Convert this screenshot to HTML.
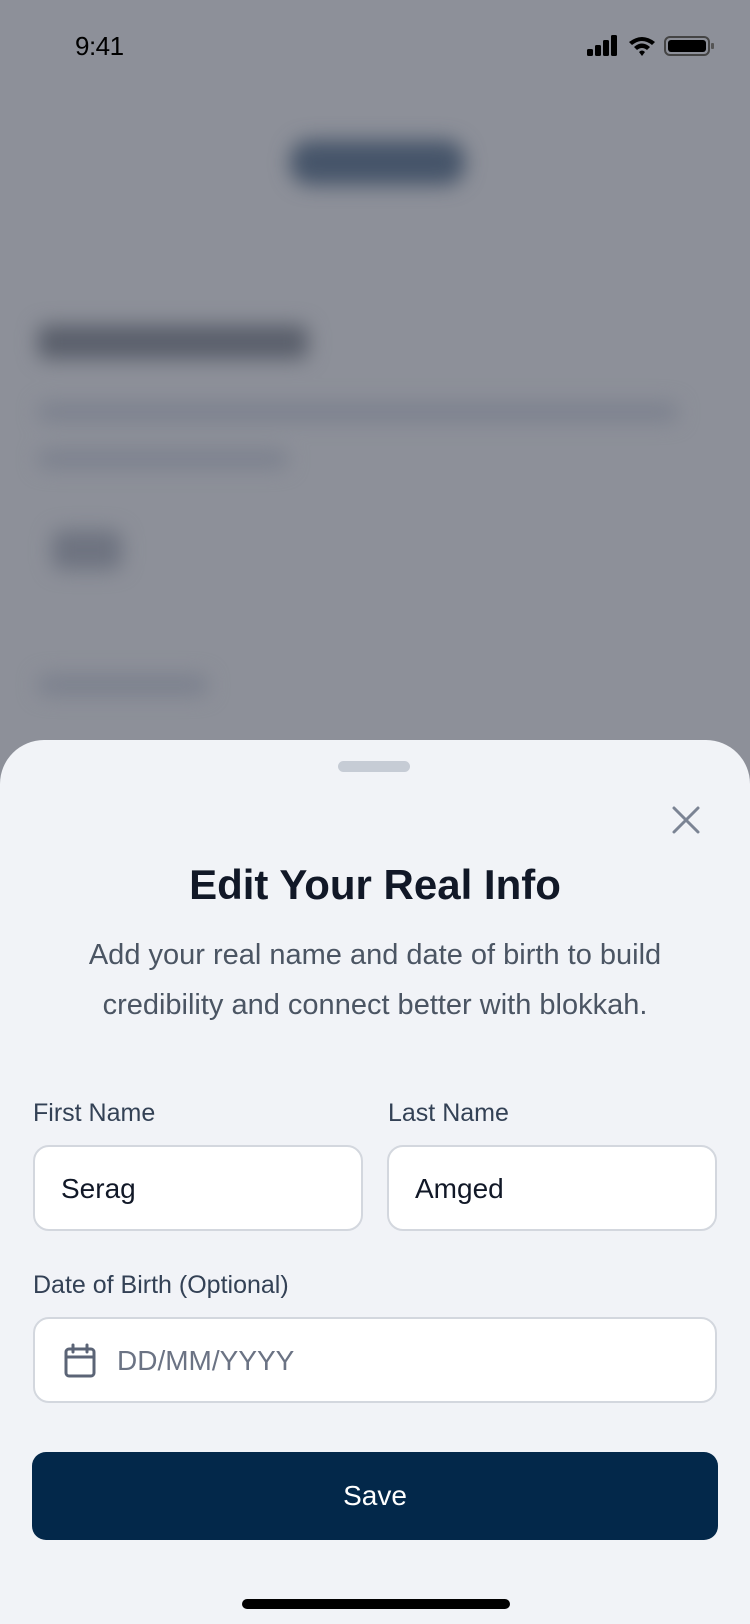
<!DOCTYPE html>
<html><head><meta charset="utf-8"><style>
*{margin:0;padding:0;box-sizing:border-box}
body{width:750px;height:1624px;overflow:hidden;background:#8d9099;font-family:"Liberation Sans",sans-serif;position:relative}
.abs{position:absolute}
.blur{filter:blur(10px)}
.sheet{position:absolute;left:0;top:740px;width:750px;height:884px;background:#f1f3f7;border-radius:44px 44px 0 0}
.lbl{position:absolute;font-size:25px;color:#334155}
.inp{position:absolute;background:#fff;border:2px solid #d3d7de;border-radius:16px;height:86px}
.val{position:absolute;left:26px;top:26px;font-size:28px;color:#111827}
</style></head><body>
<div class="abs" style="left:75px;top:31px;font-size:26px;color:#000;letter-spacing:-0.5px">9:41</div>
<svg class="abs" style="left:585px;top:34px" width="135" height="24" viewBox="0 0 135 24">
<rect x="2" y="15" width="6" height="7" rx="1.5" fill="#000"/><rect x="10" y="11" width="6" height="11" rx="1.5" fill="#000"/><rect x="18" y="6" width="6" height="16" rx="1.5" fill="#000"/><rect x="26" y="1" width="6" height="21" rx="1.5" fill="#000"/>
<path d="M44 8 Q57 -2 70 8 L67 11 Q57 3 47 11Z M49 13 Q57 6 65 13 L62 16 Q57 12 52 16Z M54 18 Q57 15 60 18 L57 22Z" fill="#000"/>
<rect x="80" y="3" width="44" height="18" rx="5" fill="none" stroke="#444" stroke-width="2"/><rect x="83" y="6" width="38" height="12" rx="3" fill="#000"/><rect x="126" y="9" width="3" height="6" rx="1" fill="#555"/>
</svg>
<div class="blur">
<div class="abs" style="left:290px;top:140px;width:175px;height:45px;background:#35465e;border-radius:20px;opacity:.8"></div>
<div class="abs" style="left:38px;top:325px;width:270px;height:34px;background:#5a5f6b;border-radius:8px"></div>
<div class="abs" style="left:38px;top:403px;width:640px;height:18px;background:#7b808d;border-radius:8px"></div>
<div class="abs" style="left:38px;top:450px;width:250px;height:18px;background:#7b808d;border-radius:8px"></div>
<div class="abs" style="left:52px;top:530px;width:70px;height:40px;background:#6e7380;border-radius:10px"></div>
<div class="abs" style="left:38px;top:675px;width:170px;height:20px;background:#7b808d;border-radius:8px"></div>
</div>
<div class="sheet"></div>
<div class="abs" style="left:338px;top:761px;width:72px;height:11px;background:#c6ccd5;border-radius:6px"></div>
<svg class="abs" style="left:670px;top:804px" width="32" height="32" viewBox="0 0 32 32"><path d="M4 4L28 28M28 4L4 28" stroke="#7b8494" stroke-width="3" stroke-linecap="round"/></svg>
<div class="abs" style="left:0;top:861px;width:750px;text-align:center;font-size:42px;font-weight:bold;color:#111827">Edit Your Real Info</div>
<div class="abs" style="left:0;top:930px;width:750px;text-align:center;font-size:29px;line-height:50px;color:#4b5563">Add your real name and date of birth to build<br>credibility and connect better with blokkah.</div>
<div class="lbl" style="left:33px;top:1099px">First Name</div>
<div class="lbl" style="left:388px;top:1099px">Last Name</div>
<div class="inp" style="left:33px;top:1145px;width:330px"><div class="val">Serag</div></div>
<div class="inp" style="left:387px;top:1145px;width:330px"><div class="val">Amged</div></div>
<div class="lbl" style="left:33px;top:1271px">Date of Birth (Optional)</div>
<div class="inp" style="left:33px;top:1317px;width:684px">
<svg class="abs" style="left:27px;top:24px" width="36" height="36" viewBox="0 0 36 36"><rect x="4" y="6" width="28" height="27" rx="3" fill="none" stroke="#5b6476" stroke-width="3"/><path d="M4 14H32M11 2V9M25 2V9" stroke="#5b6476" stroke-width="3" stroke-linecap="round"/></svg>
<div class="val" style="left:82px;color:#6b7384">DD/MM/YYYY</div></div>
<div class="abs" style="left:32px;top:1452px;width:686px;height:88px;background:#03284a;border-radius:14px;color:#fff;font-size:28px;text-align:center;line-height:88px">Save</div>
<div class="abs" style="left:242px;top:1599px;width:268px;height:10px;background:#000;border-radius:5px"></div>
</body></html>
